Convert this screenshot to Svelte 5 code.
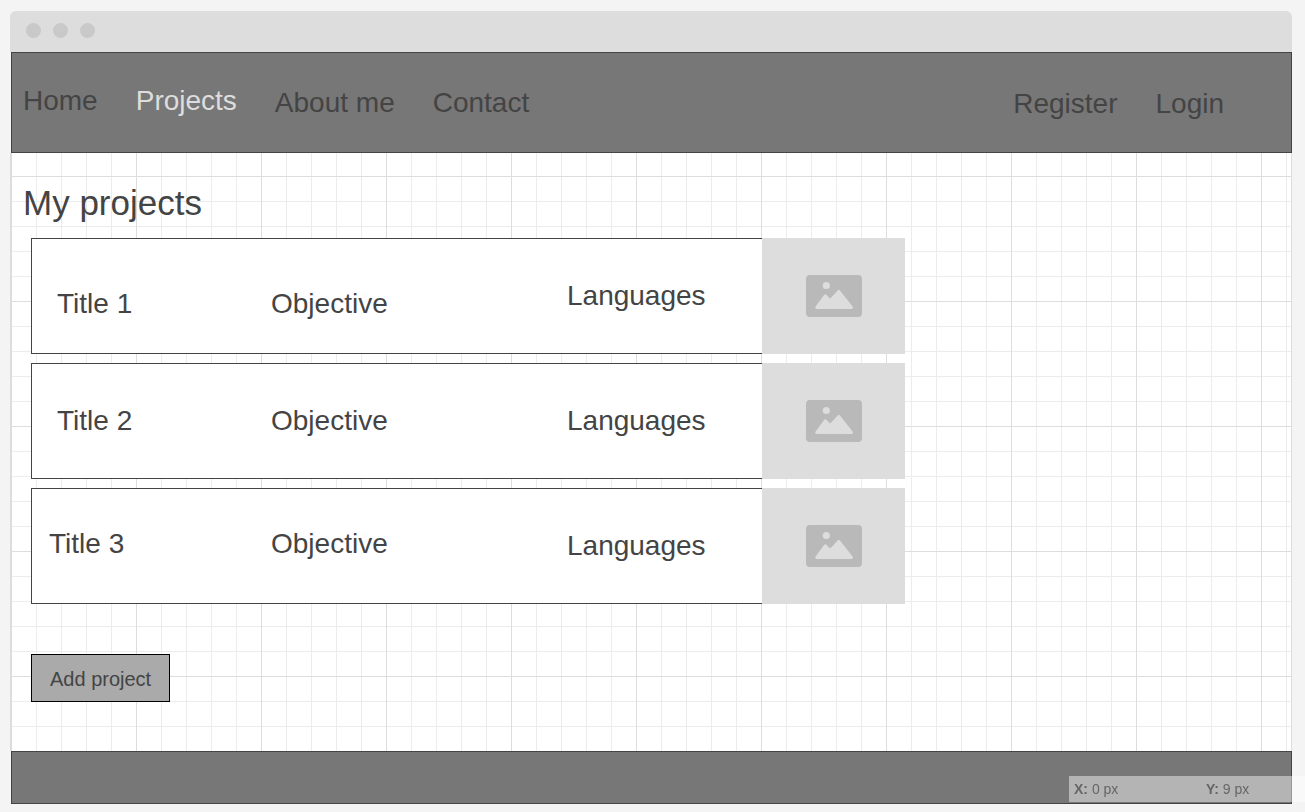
<script>
  const mainLinks = [
    { label: 'Home', high: true },
    { label: 'Projects', high: true, active: true },
    { label: 'About me' },
    { label: 'Contact' },
  ];
  const accountLinks = ['Register', 'Login'];
  const projects = [
    { title: 'Title 1', low: true },
    { title: 'Title 2' },
    { title: 'Title 3', tight: true },
  ];
</script>

<div class="window">
  <div class="titlebar" aria-hidden="true">
    <span class="dot"></span>
    <span class="dot"></span>
    <span class="dot"></span>
  </div>

  <header>
    <nav aria-label="Main">
      {#each mainLinks as link}
        <a href="#top" class:high={link.high} class:active={link.active}>{link.label}</a>
      {/each}
    </nav>
    <nav aria-label="Account">
      {#each accountLinks as label}
        <a href="#top">{label}</a>
      {/each}
    </nav>
  </header>

  <main>
    <h1>My projects</h1>
    <ul>
      {#each projects as project}
        <li>
          <div class="details" class:tight={project.tight}>
            <span class:low={project.low} class:high={project.tight}>{project.title}</span>
            <span class:low={project.low} class:high={project.tight}>Objective</span>
            <span>Languages</span>
          </div>
          <div class="thumb">
            <svg width="56" height="42" viewBox="0 0 56 42" aria-hidden="true">
              <rect width="56" height="42" rx="4" fill="#b9b9b9" />
              <circle cx="20.3" cy="10.5" r="3.6" fill="#ddd" />
              <path
                d="M10.8 32.5 L19.3 20.8 L24.1 25.8 L32.8 16.4 L45.4 32.5 Z"
                fill="#ddd"
                stroke="#ddd"
                stroke-width="3"
                stroke-linejoin="round"
              />
            </svg>
          </div>
        </li>
      {/each}
    </ul>
    <button type="button">Add project</button>
  </main>

  <footer></footer>
</div>

<div class="coords">
  <span><b>X:</b> 0 px</span>
  <span><b>Y:</b> 9 px</span>
</div>

<style>
  :global(body) {
    margin: 0;
    background: #f4f4f4;
    color: #444;
    font-family: 'Liberation Sans', Arial, sans-serif;
  }

  :global(#app) {
    display: flex;
    flex-direction: column;
    min-height: 100vh;
  }

  .window {
    flex: 1;
    display: flex;
    flex-direction: column;
    margin: 11px 13px 8px 10px;
  }

  .titlebar {
    display: flex;
    align-items: center;
    gap: 12px;
    height: 41px;
    padding: 0 16px 2px;
    box-sizing: border-box;
    border-radius: 6px 6px 0 0;
    background: #ddd;
  }

  .dot {
    width: 15px;
    height: 15px;
    border-radius: 50%;
    background: #c9c9c9;
  }

  header {
    display: flex;
    justify-content: space-between;
    align-items: center;
    box-sizing: border-box;
    min-height: 101px;
    margin-left: 1px;
    padding: 0 67px 0 11px;
    border: 1px solid #444;
    background: #777;
  }

  nav {
    display: flex;
    gap: 38px;
  }

  a {
    color: #444;
    font-size: 28px;
    line-height: 32px;
    text-decoration: none;
    padding-top: 2px;
  }

  .high {
    padding: 0 0 4px;
  }

  .active {
    color: #ddd;
  }

  main {
    flex: 1;
    padding: 30px 20px 49px;
    border: solid #ddd;
    border-width: 0 1px;
    background-color: #fff;
    background-image:
      linear-gradient(90deg, #ddd 1px, transparent 1px),
      linear-gradient(#ddd 1px, transparent 1px),
      linear-gradient(90deg, #ececec 1px, transparent 1px),
      linear-gradient(#ececec 1px, transparent 1px);
    background-size: 125px 125px, 125px 125px, 25px 25px, 25px 25px;
    background-position: 0 23px;
  }

  h1 {
    margin: 0 0 15px -8px;
    font-size: 35px;
    line-height: 40px;
    font-weight: 400;
  }

  ul {
    display: flex;
    flex-direction: column;
    gap: 9px;
    max-width: 874px;
    margin: 0 0 50px;
    padding: 0;
    list-style: none;
  }

  li {
    display: flex;
    min-height: 116px;
  }

  .details {
    flex: 1;
    display: grid;
    grid-template-columns: 214fr 296fr 195fr;
    align-items: center;
    padding-left: 25px;
    border: 1px solid #444;
    border-right: 0;
    background: #fff;
    font-size: 28px;
    line-height: 32px;
  }

  .tight {
    grid-template-columns: 222fr 296fr 195fr;
    padding-left: 17px;
  }

  .low {
    padding-top: 16px;
  }

  .thumb {
    display: flex;
    align-items: center;
    justify-content: center;
    width: 143px;
    background: #ddd;
  }

  button {
    height: 48px;
    padding: 2px 18px 0;
    border: 1px solid #000;
    background: #aaa;
    color: #444;
    font: 20px/24px 'Liberation Sans', Arial, sans-serif;
  }

  footer {
    box-sizing: border-box;
    height: 53px;
    margin-left: 1px;
    border: 1px solid #444;
    background: #777;
  }

  .coords {
    position: fixed;
    right: 0;
    bottom: 10px;
    display: grid;
    grid-template-columns: 132px 99px;
    padding-left: 5px;
    background: rgba(255, 255, 255, 0.45);
    color: #666;
    font-size: 14px;
    line-height: 26px;
  }
</style>
